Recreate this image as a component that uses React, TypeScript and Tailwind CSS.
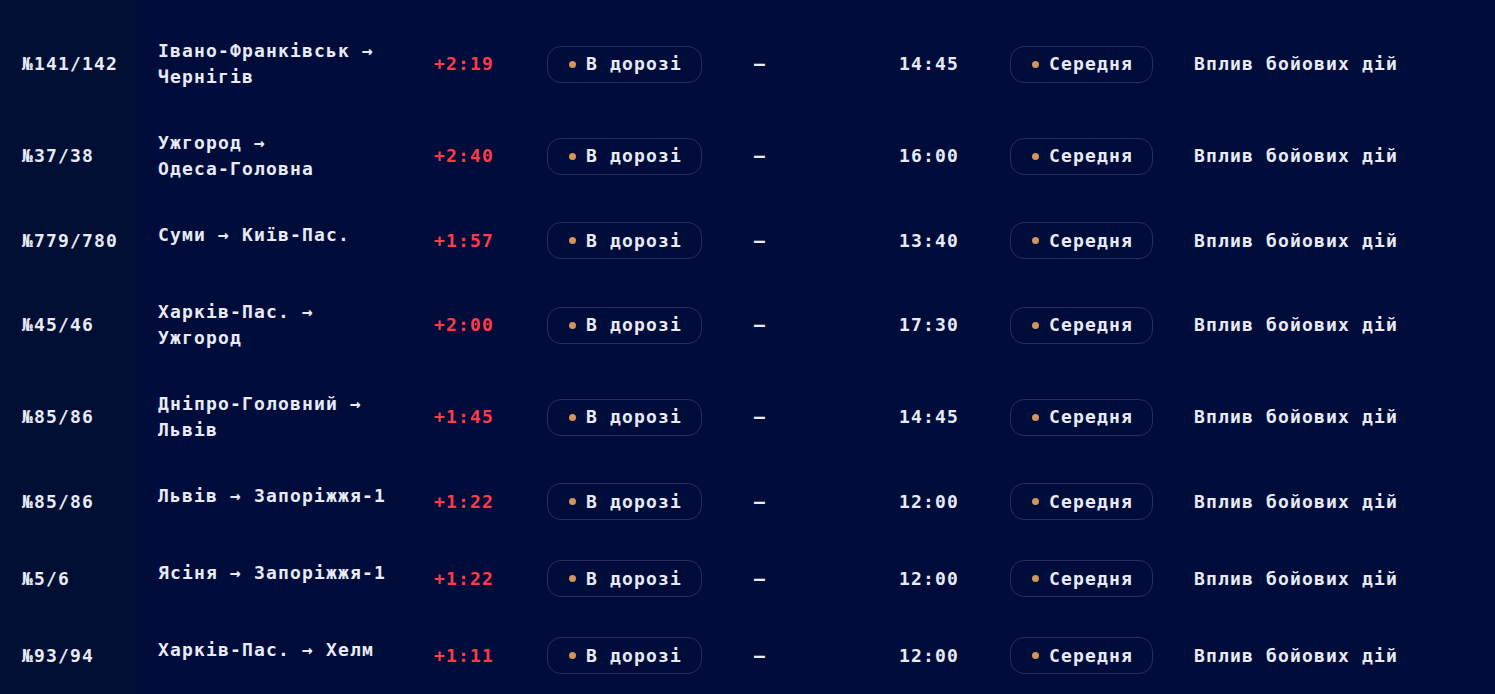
import React from 'react';

type Train = {
  num: string;
  from: string;
  to: string;
  delay: string;
  eta: string;
};

const trains: Train[] = [
  { num: '№141/142', from: 'Івано-Франківськ', to: 'Чернігів', delay: '+2:19', eta: '14:45' },
  { num: '№37/38', from: 'Ужгород', to: 'Одеса-Головна', delay: '+2:40', eta: '16:00' },
  { num: '№779/780', from: 'Суми', to: 'Київ-Пас.', delay: '+1:57', eta: '13:40' },
  { num: '№45/46', from: 'Харків-Пас.', to: 'Ужгород', delay: '+2:00', eta: '17:30' },
  { num: '№85/86', from: 'Дніпро-Головний', to: 'Львів', delay: '+1:45', eta: '14:45' },
  { num: '№85/86', from: 'Львів', to: 'Запоріжжя-1', delay: '+1:22', eta: '12:00' },
  { num: '№5/6', from: 'Ясіня', to: 'Запоріжжя-1', delay: '+1:22', eta: '12:00' },
  { num: '№93/94', from: 'Харків-Пас.', to: 'Хелм', delay: '+1:11', eta: '12:00' },
];

function Pill({ label }: { label: string }) {
  return (
    <span className="inline-flex h-[37px] items-center gap-[10px] rounded-[14px] border border-[#2b2d5c] pl-[21px] pr-[19px]">
      <span className="h-[7px] w-[7px] rounded-full bg-[#d4945a]" />
      <span>{label}</span>
    </span>
  );
}

export default function App() {
  return (
    <div className="h-[694px] w-full overflow-hidden bg-[#000c3a]">
      <table
        className="w-[1495px] table-fixed border-collapse text-[18px] leading-[26px] font-bold tracking-[1.16px] text-[#e8ebf7]"
        style={{ fontFamily: '"DejaVu Sans Mono", "Liberation Mono", monospace' }}
      >
        <colgroup>
          <col className="w-[137px]" />
          <col className="w-[276px]" />
          <col className="w-[113px]" />
          <col className="w-[207px]" />
          <col className="w-[145px]" />
          <col className="w-[111px]" />
          <col className="w-[184px]" />
          <col className="w-[322px]" />
        </colgroup>
        <tbody>
          <tr className="h-[18px]">
            <td className="bg-[#020f34]" />
            <td colSpan={7} />
          </tr>
          {trains.map((t, i) => (
            <tr key={i}>
              <td className="bg-[#020f34] py-5 pl-[22px] align-middle whitespace-nowrap">{t.num}</td>
              <td className="py-5 pl-[21px] pr-[21px] align-top">
                <span className="whitespace-nowrap">{t.from} →</span>{' '}
                <span className="whitespace-nowrap">{t.to}</span>
              </td>
              <td className="py-5 pl-[21px] align-middle text-[#ff3b47]">{t.delay}</td>
              <td className="py-5 pl-[21px] align-middle">
                <Pill label="В дорозі" />
              </td>
              <td className="py-5 pl-[21px] align-middle">—</td>
              <td className="py-5 pl-[21px] align-middle">{t.eta}</td>
              <td className="py-5 pl-[21px] align-middle">
                <Pill label="Середня" />
              </td>
              <td className="py-5 pl-[21px] align-middle whitespace-nowrap">Вплив бойових дій</td>
            </tr>
          ))}
        </tbody>
      </table>
    </div>
  );
}
